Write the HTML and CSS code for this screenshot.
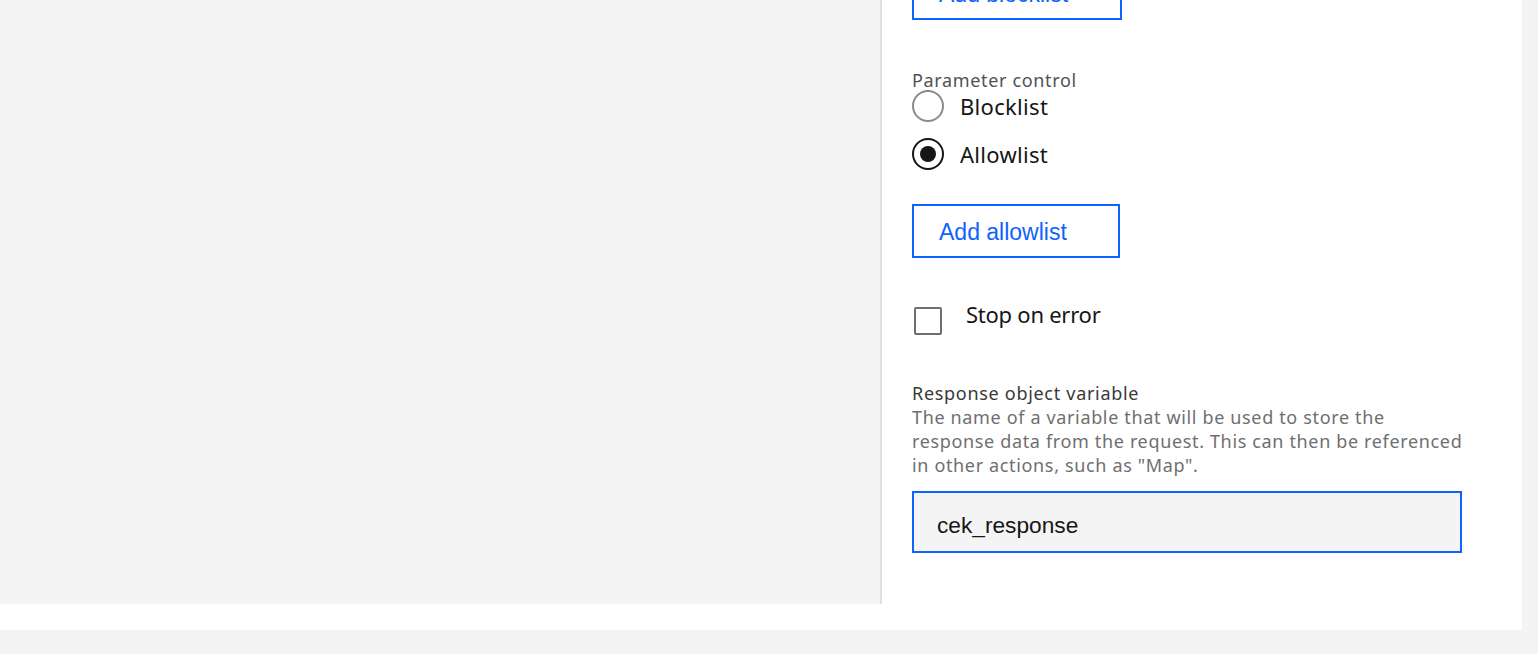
FILE: index.html
```html
<!DOCTYPE html>
<html lang="en">
<head>
<meta charset="utf-8">
<title>Action settings</title>
<link rel="stylesheet" href="styles.css">
</head>
<body>
<div class="page">
  <div class="split">
    <div class="left-pane"></div>
    <div class="right-pane">
      <div class="content">
        <button class="btn btn-block" type="button">Add blocklist</button>

        <div class="fieldset">
          <div class="field-label">Parameter control</div>
          <div class="radios">
            <div class="radio">
              <span class="radio-circle"></span>
              <span class="radio-text">Blocklist</span>
            </div>
            <div class="radio">
              <span class="radio-circle checked"><span class="radio-dot"></span></span>
              <span class="radio-text">Allowlist</span>
            </div>
          </div>
        </div>

        <button class="btn btn-allow" type="button">Add allowlist</button>

        <div class="check-row">
          <span class="checkbox"></span>
          <span class="check-text">Stop on error</span>
        </div>

        <div class="field">
          <div class="field-title">Response object variable</div>
          <div class="helper">The name of a variable that will be used to store the<br>response data from the request. This can then be referenced<br>in other actions, such as "Map".</div>
          <div class="input">cek_response</div>
        </div>
      </div>
    </div>
  </div>
  <div class="footer-strip"></div>
</div>
</body>
</html>
```
FILE: styles.css
```css
* { box-sizing: border-box; }
html, body { margin: 0; padding: 0; }
body {
  background: #f4f4f4;
  font-family: "Noto Sans", "DejaVu Sans", sans-serif;
  color: #161616;
  overflow: hidden;
  height: 654px;
}
.page {
  width: 1522px;
  background: #ffffff;
}
.split {
  display: flex;
  align-items: stretch;
}
.left-pane {
  width: 882px;
  background: #f4f4f4;
  border-right: 2px solid #e0e0e0;
  flex: none;
}
.right-pane {
  flex: 1;
  padding: 0 58px 51px 30px;
  overflow: hidden;
}
.content {
  margin-top: -34px;
  display: flex;
  flex-direction: column;
  align-items: flex-start;
}
.btn {
  height: 54px;
  border: 2px solid #0f62fe;
  background: #ffffff;
  color: #0f62fe;
  font-family: "Liberation Sans", Arial, sans-serif;
  font-size: 23px;
  text-align: left;
  padding: 2px 0 0 25px;
  margin: 0;
  line-height: 48px;
}
.btn-block { width: 210px; }
.btn-allow { width: 208px; margin-top: 34px; }

.fieldset { margin-top: 51px; }
.field-label {
  font-size: 18px;
  line-height: 19px;
  color: #525252;
  letter-spacing: 0.65px;
}
.radios {
  display: flex;
  flex-direction: column;
  gap: 16px;
}
.radio {
  display: flex;
  align-items: center;
  gap: 16px;
  height: 32px;
}
.radio-circle {
  width: 32px;
  height: 32px;
  border-radius: 50%;
  border: 2.5px solid #8a8a8a;
  display: flex;
  align-items: center;
  justify-content: center;
  flex: none;
}
.radio-circle.checked { border-color: #161616; }
.radio-dot {
  width: 16px;
  height: 16px;
  border-radius: 50%;
  background: #161616;
}
.radio-text {
  font-size: 22px;
  line-height: 32px;
  letter-spacing: 0.3px;
  color: #161616;
}
.check-row {
  margin-top: 44px;
  display: flex;
  align-items: flex-start;
}
.checkbox {
  width: 28px;
  height: 28px;
  margin: 5px 0 0 2px;
  border: 2px solid #6f6f6f;
  border-radius: 2px;
  flex: none;
}
.check-text {
  margin-left: 24px;
  font-size: 22px;
  line-height: 24px;
  letter-spacing: -0.25px;
  color: #161616;
}
.field { margin-top: 46px; }
.field-title {
  font-size: 18px;
  line-height: 24px;
  color: #393939;
  letter-spacing: 0.7px;
}
.helper {
  font-size: 18px;
  line-height: 24px;
  color: #6f6f6f;
  letter-spacing: 0.65px;
  white-space: nowrap;
}
.input {
  margin-top: 14px;
  width: 550px;
  height: 62px;
  border: 2px solid #0f62fe;
  background: #f4f4f4;
  padding: 6px 0 0 23px;
  font-family: "Liberation Sans", Arial, sans-serif;
  font-size: 22.7px;
  line-height: 52px;
  color: #161616;
}
.footer-strip {
  height: 26px;
  background: #ffffff;
}
```
